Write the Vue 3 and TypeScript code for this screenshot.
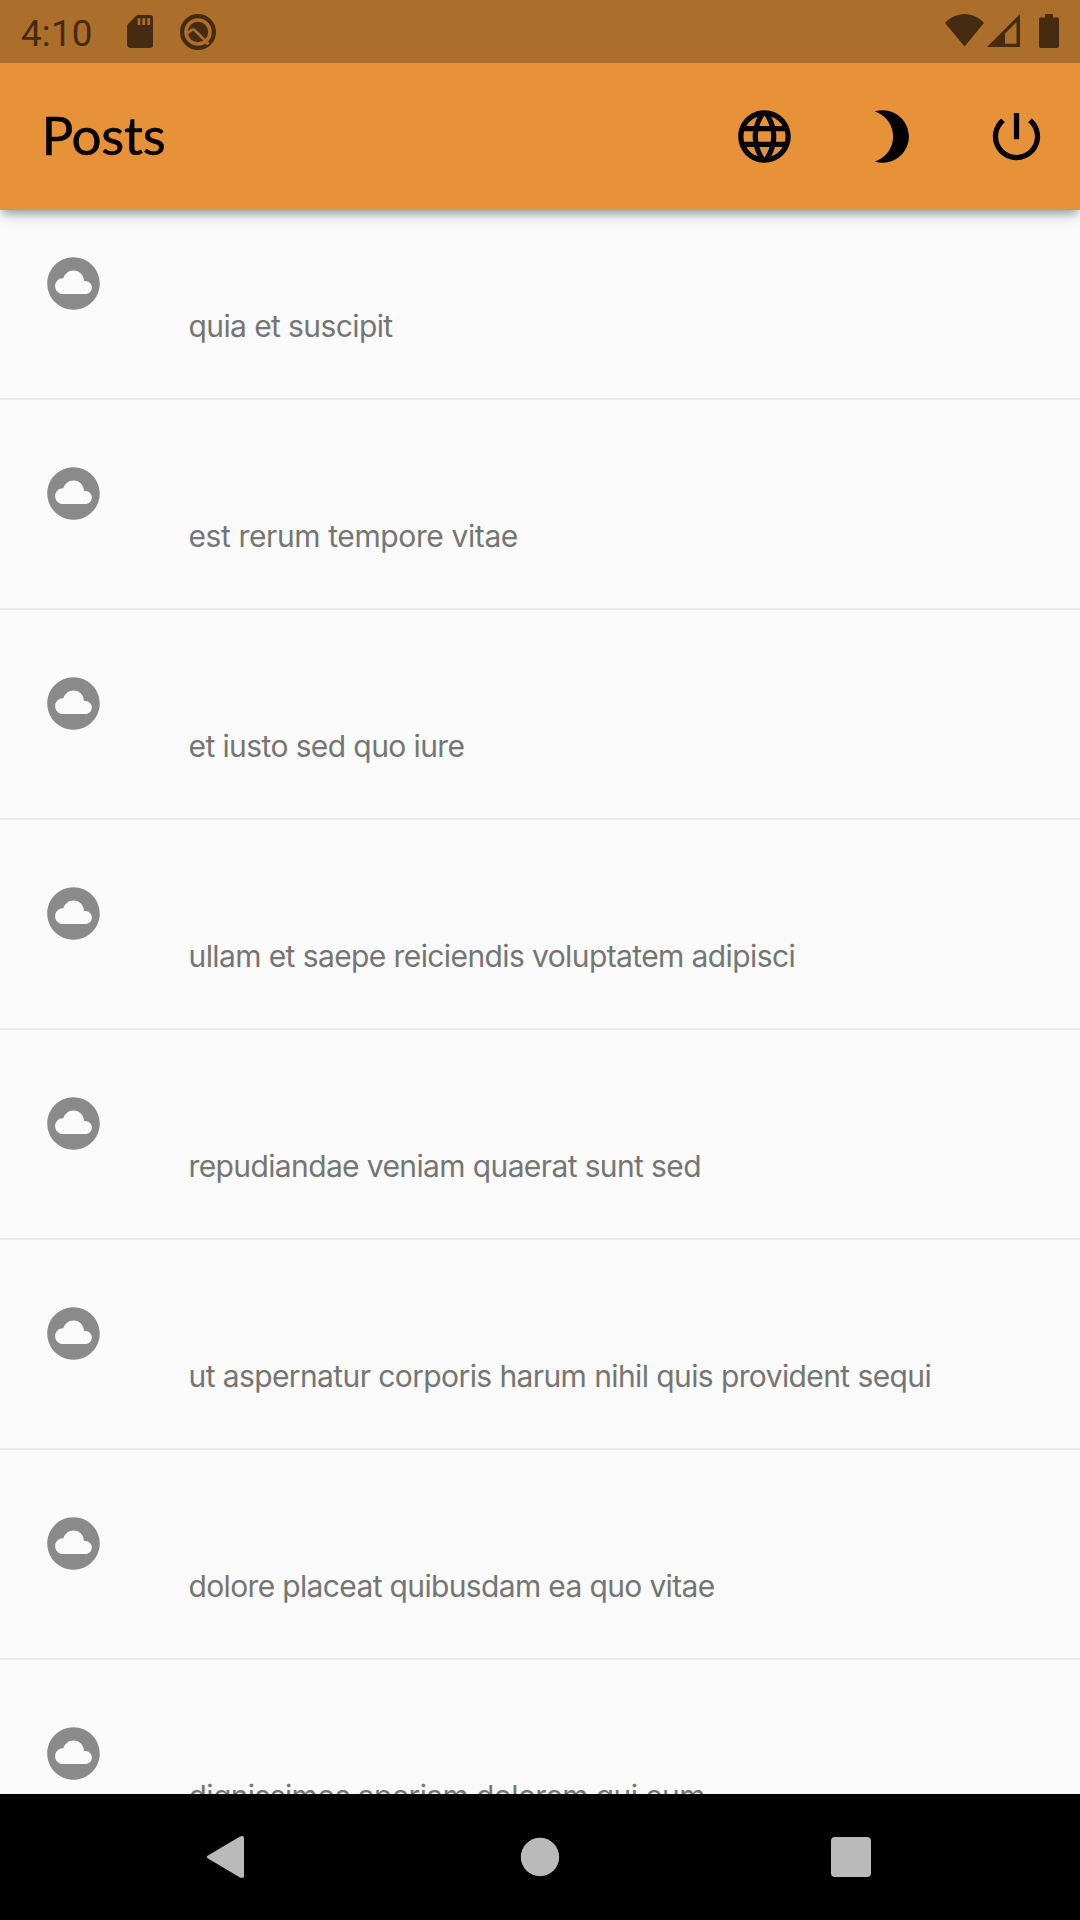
<script setup lang="ts">
interface Post {
  title: string
  tracking: number
}

const posts: Post[] = [
  { title: 'quia et suscipit', tracking: -0.6 },
  { title: 'est rerum tempore vitae', tracking: -0.39 },
  { title: 'et iusto sed quo iure', tracking: -0.6 },
  { title: 'ullam et saepe reiciendis voluptatem adipisci', tracking: -0.6 },
  { title: 'repudiandae veniam quaerat sunt sed', tracking: -0.62 },
  { title: 'ut aspernatur corporis harum nihil quis provident sequi', tracking: -0.6 },
  { title: 'dolore placeat quibusdam ea quo vitae', tracking: -0.65 },
  { title: 'dignissimos aperiam dolorem qui eum', tracking: -0.61 },
]
</script>

<template>
  <div class="screen">
    <div class="status-bar">
      <span class="clock">4:10</span>
      <svg class="sd" viewBox="4 2 16 20">
        <path d="M18 2h-8L4.02 8 4 20c0 1.1.9 2 2 2h12c1.1 0 2-.9 2-2V4c0-1.1-.9-2-2-2zm-6 6h-1.6V4H12v4zm3 0h-1.7V4H15v4zm3 0h-1.7V4H18v4z" />
      </svg>
      <svg class="debug" viewBox="0 0 36 36">
        <circle cx="18" cy="18" r="15.9" fill="none" stroke="currentColor" stroke-width="4.2" />
        <circle cx="18" cy="18" r="10.2" />
        <path d="M6.500 20L12 15.700Q13.500 15 15 16.500L28.500 30" fill="none" stroke="#ac6e2b" stroke-width="2.600" />
        <circle cx="26.800" cy="28.800" r="1.900" fill="#b8661f" />
      </svg>
      <span class="spacer"></span>
      <svg class="wifi" viewBox="0 0 39 33"><path d="M19.500 32.500L0 9C5 3.500 12 0 19.500 0S34 3.500 39 9z" /></svg>
      <svg class="signal" viewBox="0 0 33 33"><path fill-rule="evenodd" d="M33 0v33H0zM29.500 8L18 19.500v10.300h11.500z" /></svg>
      <svg class="battery" viewBox="0 0 20 34"><path d="M6 0h8v3.500h4.500Q20 3.500 20 5v27.300q0 1.700-1.700 1.700H1.700Q0 34 0 32.300V5q0-1.500 1.500-1.500H6z" /></svg>
    </div>

    <header class="app-bar">
      <h1>Posts</h1>
      <svg class="action" viewBox="0 0 24 24">
        <path d="M11.990 2C6.470 2 2 6.480 2 12s4.470 10 9.990 10C17.520 22 22 17.520 22 12S17.520 2 11.990 2zm6.930 6h-2.950a15.650 15.650 0 0 0-1.380-3.560A8.030 8.030 0 0 1 18.920 8zM12 4.040c.83 1.200 1.480 2.530 1.910 3.960h-3.820c.43-1.430 1.080-2.760 1.910-3.960zM4.260 14C4.100 13.360 4 12.690 4 12s.1-1.360.26-2h3.380c-.08.66-.14 1.320-.14 2s.06 1.340.14 2H4.260zm.82 2h2.950c.32 1.250.78 2.450 1.380 3.560A7.987 7.987 0 0 1 5.080 16zm2.950-8H5.080a7.987 7.987 0 0 1 4.330-3.560A15.650 15.650 0 0 0 8.030 8zM12 19.960c-.83-1.200-1.480-2.530-1.910-3.960h3.820c-.43 1.430-1.080 2.760-1.910 3.960zM14.340 14H9.660c-.09-.66-.16-1.320-.16-2s.07-1.350.16-2h4.680c.09.65.16 1.320.16 2s-.07 1.340-.16 2zm.25 5.560c.6-1.110 1.060-2.310 1.380-3.560h2.950a8.030 8.030 0 0 1-4.330 3.560zM16.360 14c.08-.66.14-1.320.14-2s-.06-1.340-.14-2h3.380c.16.64.26 1.310.26 2s-.1 1.360-.26 2h-3.380z" />
      </svg>
      <svg class="action" viewBox="0 0 24 24">
        <path d="M9 2c-1.050 0-2.050.16-3 .46 4.060 1.270 7 5.060 7 9.540 0 4.480-2.940 8.270-7 9.540.95.3 1.950.46 3 .46 5.520 0 10-4.480 10-10S14.520 2 9 2z" />
      </svg>
      <svg class="action" viewBox="0 0 24 24">
        <path d="M13 3h-2v10h2V3zm4.830 2.170l-1.420 1.420C17.990 7.860 19 9.810 19 12c0 3.870-3.130 7-7 7s-7-3.130-7-7c0-2.190 1.010-4.140 2.580-5.420L6.170 5.170C4.230 6.820 3 9.260 3 12c0 4.970 4.030 9 9 9s9-4.030 9-9c0-2.740-1.230-5.180-3.170-6.830z" />
      </svg>
    </header>

    <main class="list">
      <div v-for="post in posts" :key="post.title" class="row">
        <svg class="cloud" viewBox="0 0 24 24">
          <path d="M12 2C6.480 2 2 6.480 2 12s4.480 10 10 10 10-4.480 10-10S17.520 2 12 2zm4.500 14H8c-1.660 0-3-1.340-3-3s1.340-3 3-3l.14.010C8.580 8.280 10.130 7 12 7c2.210 0 4 1.790 4 4h.5c1.380 0 2.500 1.120 2.500 2.500S17.880 16 16.500 16z" />
        </svg>
        <span class="title" :style="{ letterSpacing: post.tracking + 'px' }">{{ post.title }}</span>
      </div>
    </main>

    <nav class="nav-bar">
      <svg viewBox="0 0 48 48"><path d="M7 22.600L39 3.400Q43 2 43 5v38q0 3-4 1.600L7 25.400Q4.500 24 7 22.600z" /></svg>
      <svg viewBox="0 0 48 48"><circle cx="26" cy="24" r="19.200" /></svg>
      <svg viewBox="0 0 48 48"><rect x="4" y="4" width="40" height="40" rx="4" /></svg>
    </nav>
  </div>
</template>

<style>
body {
  margin: 0;
  background: #fafafa;
}
</style>

<style scoped>
.screen {
  display: flex;
  flex-direction: column;
  width: 1080px;
  height: 1920px;
  overflow: hidden;
  background: #fafafa;
}

svg {
  display: block;
  flex: none;
  fill: currentColor;
}

.status-bar {
  display: flex;
  align-items: flex-start;
  flex: none;
  box-sizing: border-box;
  height: 63px;
  padding: 0 21px 0 21px;
  background: #ac6e2b;
  color: #452b11;
  z-index: 2;
}

.clock {
  width: 105.500px;
  margin-top: 12px;
  font: 36.750px/43px Roboto, sans-serif;
  letter-spacing: 0.200px;
}

.sd {
  width: 26.500px;
  height: 33px;
  margin-top: 15px;
}

.debug {
  width: 36px;
  height: 36px;
  margin: 13.500px 0 0 27px;
}

.spacer {
  flex: 1;
}

.wifi {
  width: 39px;
  height: 33px;
  margin: 14px 3px 0 0;
}

.signal {
  width: 33px;
  height: 33px;
  margin: 14px 19px 0 0;
}

.battery {
  width: 20px;
  height: 34px;
  margin-top: 14px;
}

.app-bar {
  display: flex;
  align-items: center;
  flex: none;
  gap: 63px;
  box-sizing: border-box;
  height: 147px;
  padding: 0 32px 0 41.500px;
  background: #e79138;
  color: #000;
  box-shadow: 0 6px 9px -3px rgba(0, 0, 0, 0.36), 0 6px 16px rgba(0, 0, 0, 0.09);
  z-index: 1;
}

h1 {
  flex: 1;
  margin: -3px 0 0;
  font: 400 53px/64px Lato, sans-serif;
  letter-spacing: -0.300px;
  -webkit-text-stroke: 0.500px #000;
}

.action {
  width: 63px;
  height: 63px;
}

.list {
  flex: 1;
  min-height: 0;
  margin-top: -20px;
  overflow: hidden;
}

.row {
  display: flex;
  align-items: flex-start;
  box-sizing: border-box;
  height: 210px;
  padding: 61.500px 42px 0;
  border-bottom: 2px solid #eaeaea;
}

.cloud {
  width: 63px;
  height: 63px;
  color: #8a8a8a;
}

.title {
  margin: 55px 0 0 83.500px;
  color: #757575;
  font: 30px/38px Inter, sans-serif;
  white-space: nowrap;
}

.nav-bar {
  display: flex;
  align-items: center;
  justify-content: space-between;
  flex: none;
  box-sizing: border-box;
  height: 126px;
  padding: 0 205px 0 201px;
  background: #000;
  color: #bababa;
}

.nav-bar svg {
  width: 48px;
  height: 48px;
}
</style>
